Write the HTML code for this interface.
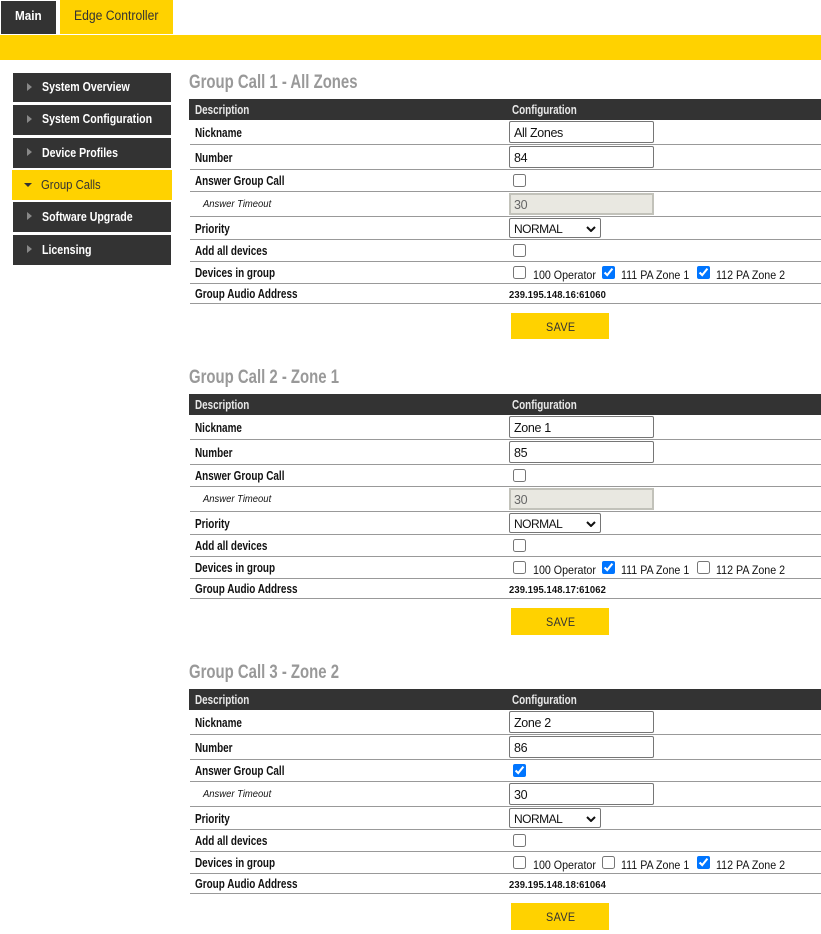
<!DOCTYPE html>
<html><head><meta charset="utf-8"><style>
html,body{margin:0;padding:0;background:#fff;width:821px;height:934px;overflow:hidden}
body{position:relative;font-family:"Liberation Sans",Arial,sans-serif;color:#111}
div,span,input,select,svg{position:absolute;box-sizing:border-box}
.g{left:0;width:821px;height:320px}
.t{white-space:nowrap;transform:scaleX(.9);transform-origin:0 50%;line-height:16px}
.nav{left:13px;width:158px;background:#333;color:#fff}
.nav .t{left:29px;font-size:13px;font-weight:bold;top:6px;transform:scaleX(.815)}
.arr{left:14px;top:10px;width:0;height:0;border-left:5px solid #888;border-top:4px solid transparent;border-bottom:4px solid transparent}
.h{left:189px;top:73px;font-size:19px;font-weight:bold;color:#999;line-height:20px;transform:scaleX(.785)}
.bar{left:189px;top:99px;width:632px;height:21px;background:#333}
.bar .t{top:3px;font-size:12.5px;font-weight:bold;color:#e8e8e8;transform:scaleX(.79)}
.ln{left:190px;width:631px;height:1px;background:#999}
.l{left:195px;font-size:12.5px;font-weight:bold;transform:scaleX(.795)}
.i{left:203px;font-size:10.5px;font-style:italic}
.in{left:509px;width:145px;height:22px;border:1px solid #767676;border-radius:2px;background:#fff;padding:2px 0 0 4px;font:12.5px "Liberation Sans",sans-serif;letter-spacing:-.35px;color:#111}
.dis{height:22px;background:#e9e8e1;border:2px solid #c2c2ba;border-radius:0;color:#666;padding:2px 0 0 3px}
.c{width:13px;height:13px;margin:0;accent-color:#0075ff}
.sel{left:509px;width:92px;height:20px;font:12px "Liberation Sans",sans-serif;letter-spacing:-.5px;color:#111;background:#fff;border:1px solid #767676;border-radius:2px;padding:2px 0 0 4px;appearance:none;-webkit-appearance:none}
.chev{left:586px;top:226px;width:10px;height:6px}
.d{font-size:12px;top:267px;transform:scaleX(.89)}
.ad{left:509px;top:287px;font-size:10.5px;font-weight:bold;letter-spacing:.1px}
.sv{left:511px;top:313px;width:98px;height:26px;background:#ffd200}
.sv .t{left:35px;top:6px;font-size:12px;color:#333;letter-spacing:.4px}
</style></head><body>
<div style="left:1px;top:1px;width:55px;height:33px;background:#333"></div>
<span class="t" style="left:15px;top:8px;font-size:13px;font-weight:bold;color:#fff">Main</span>
<div style="left:60px;top:0;width:113px;height:34px;background:#ffd200"></div>
<span class="t" style="left:74px;top:8px;font-size:13.5px;color:#333">Edge Controller</span>
<div style="left:0;top:35px;width:821px;height:25px;background:#ffd200"></div>

<div class="nav" style="top:73px;height:29px"><i class="arr" style="position:absolute"></i><span class="t">System Overview</span></div>
<div class="nav" style="top:105px;height:30px"><i class="arr" style="position:absolute"></i><span class="t">System Configuration</span></div>
<div class="nav" style="top:138px;height:30px"><i class="arr" style="position:absolute"></i><span class="t" style="top:7px">Device Profiles</span></div>
<div class="nav" style="top:170px;left:12px;width:160px;height:30px;background:#ffd200;color:#333"><i style="position:absolute;left:12px;top:13px;width:0;height:0;border-top:4px solid #333;border-left:4px solid transparent;border-right:4px solid transparent"></i><span class="t" style="top:7px;font-weight:normal;transform:scaleX(.87)">Group Calls</span></div>
<div class="nav" style="top:202px;height:30px"><i class="arr" style="position:absolute"></i><span class="t" style="top:7px">Software Upgrade</span></div>
<div class="nav" style="top:235px;height:30px"><i class="arr" style="position:absolute"></i><span class="t" style="top:7px">Licensing</span></div>

<div class="g" style="top:0">
<span class="t h">Group Call 1 - All Zones</span>
<div class="bar"><span class="t" style="left:6px">Description</span><span class="t" style="left:323px">Configuration</span></div>
<span class="t l" style="top:125px">Nickname</span><input class="in" style="top:121px" value="All Zones"><div class="ln" style="top:144px"></div>
<span class="t l" style="top:150px">Number</span><input class="in" style="top:146px" value="84"><div class="ln" style="top:169px"></div>
<span class="t l" style="top:173px">Answer Group Call</span><input type="checkbox" class="c" style="left:513px;top:174px"><div class="ln" style="top:191px"></div>
<span class="t i" style="top:196px">Answer Timeout</span><input class="in dis" style="top:193px" value="30" disabled><div class="ln" style="top:216px"></div>
<span class="t l" style="top:221px">Priority</span><select class="sel" style="top:218px"><option>NORMAL</option></select><svg class="chev" viewBox="0 0 10 6"><path d="M1 1l4 4 4-4" fill="none" stroke="#111" stroke-width="2"/></svg><div class="ln" style="top:239px"></div>
<span class="t l" style="top:243px">Add all devices</span><input type="checkbox" class="c" style="left:513px;top:244px"><div class="ln" style="top:261px"></div>
<span class="t l" style="top:265px">Devices in group</span>
<input type="checkbox" class="c" style="left:513px;top:266px"><span class="t d" style="left:533px">100 Operator</span>
<input type="checkbox" class="c" style="left:602px;top:266px" checked><span class="t d" style="left:621px">111 PA Zone 1</span>
<input type="checkbox" class="c" style="left:697px;top:266px" checked><span class="t d" style="left:716px">112 PA Zone 2</span>
<div class="ln" style="top:283px"></div>
<span class="t l" style="top:286px">Group Audio Address</span><span class="t ad">239.195.148.16:61060</span><div class="ln" style="top:303px"></div>
<div class="sv"><span class="t">SAVE</span></div>
</div>

<div class="g" style="top:295px">
<span class="t h">Group Call 2 - Zone 1</span>
<div class="bar"><span class="t" style="left:6px">Description</span><span class="t" style="left:323px">Configuration</span></div>
<span class="t l" style="top:125px">Nickname</span><input class="in" style="top:121px" value="Zone 1"><div class="ln" style="top:144px"></div>
<span class="t l" style="top:150px">Number</span><input class="in" style="top:146px" value="85"><div class="ln" style="top:169px"></div>
<span class="t l" style="top:173px">Answer Group Call</span><input type="checkbox" class="c" style="left:513px;top:174px"><div class="ln" style="top:191px"></div>
<span class="t i" style="top:196px">Answer Timeout</span><input class="in dis" style="top:193px" value="30" disabled><div class="ln" style="top:216px"></div>
<span class="t l" style="top:221px">Priority</span><select class="sel" style="top:218px"><option>NORMAL</option></select><svg class="chev" viewBox="0 0 10 6"><path d="M1 1l4 4 4-4" fill="none" stroke="#111" stroke-width="2"/></svg><div class="ln" style="top:239px"></div>
<span class="t l" style="top:243px">Add all devices</span><input type="checkbox" class="c" style="left:513px;top:244px"><div class="ln" style="top:261px"></div>
<span class="t l" style="top:265px">Devices in group</span>
<input type="checkbox" class="c" style="left:513px;top:266px"><span class="t d" style="left:533px">100 Operator</span>
<input type="checkbox" class="c" style="left:602px;top:266px" checked><span class="t d" style="left:621px">111 PA Zone 1</span>
<input type="checkbox" class="c" style="left:697px;top:266px"><span class="t d" style="left:716px">112 PA Zone 2</span>
<div class="ln" style="top:283px"></div>
<span class="t l" style="top:286px">Group Audio Address</span><span class="t ad">239.195.148.17:61062</span><div class="ln" style="top:303px"></div>
<div class="sv" style="height:27px"><span class="t">SAVE</span></div>
</div>

<div class="g" style="top:590px">
<span class="t h">Group Call 3 - Zone 2</span>
<div class="bar"><span class="t" style="left:6px">Description</span><span class="t" style="left:323px">Configuration</span></div>
<span class="t l" style="top:125px">Nickname</span><input class="in" style="top:121px" value="Zone 2"><div class="ln" style="top:144px"></div>
<span class="t l" style="top:150px">Number</span><input class="in" style="top:146px" value="86"><div class="ln" style="top:169px"></div>
<span class="t l" style="top:173px">Answer Group Call</span><input type="checkbox" class="c" style="left:513px;top:174px" checked><div class="ln" style="top:191px"></div>
<span class="t i" style="top:196px">Answer Timeout</span><input class="in" style="top:193px" value="30"><div class="ln" style="top:216px"></div>
<span class="t l" style="top:221px">Priority</span><select class="sel" style="top:218px"><option>NORMAL</option></select><svg class="chev" viewBox="0 0 10 6"><path d="M1 1l4 4 4-4" fill="none" stroke="#111" stroke-width="2"/></svg><div class="ln" style="top:239px"></div>
<span class="t l" style="top:243px">Add all devices</span><input type="checkbox" class="c" style="left:513px;top:244px"><div class="ln" style="top:261px"></div>
<span class="t l" style="top:265px">Devices in group</span>
<input type="checkbox" class="c" style="left:513px;top:266px"><span class="t d" style="left:533px">100 Operator</span>
<input type="checkbox" class="c" style="left:602px;top:266px"><span class="t d" style="left:621px">111 PA Zone 1</span>
<input type="checkbox" class="c" style="left:697px;top:266px" checked><span class="t d" style="left:716px">112 PA Zone 2</span>
<div class="ln" style="top:283px"></div>
<span class="t l" style="top:286px">Group Audio Address</span><span class="t ad">239.195.148.18:61064</span><div class="ln" style="top:303px"></div>
<div class="sv" style="height:27px"><span class="t">SAVE</span></div>
</div>
</body></html>
